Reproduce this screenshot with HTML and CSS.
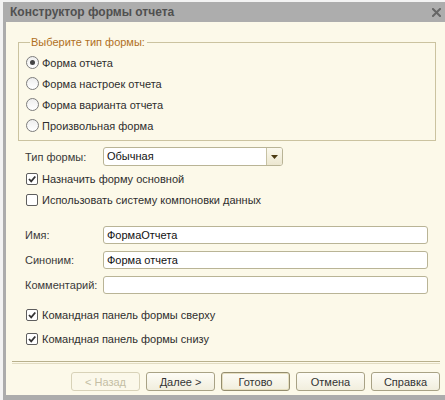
FILE: index.html
```html
<!DOCTYPE html>
<html lang="ru">
<head>
<meta charset="utf-8">
<title>Конструктор формы отчета</title>
<link rel="stylesheet" href="styles.css">
</head>
<body>
<div class="screen">
  <div class="window">
    <div class="titlebar">
      <span class="title">Конструктор формы отчета</span>
      <svg class="close" width="9" height="9" viewBox="0 0 9 9"><path d="M1 1 L8 8 M8 1 L1 8" stroke="#666" stroke-width="2" stroke-linecap="square"/></svg>
    </div>
    <div class="content">
      <fieldset class="group">
        <legend>Выберите тип формы:</legend>
        <div class="radio-row"><span class="radio checked"></span><span>Форма отчета</span></div>
        <div class="radio-row"><span class="radio"></span><span>Форма настроек отчета</span></div>
        <div class="radio-row"><span class="radio"></span><span>Форма варианта отчета</span></div>
        <div class="radio-row"><span class="radio"></span><span>Произвольная форма</span></div>
      </fieldset>

      <div class="field-row combo-row">
        <span class="label">Тип формы:</span>
        <div class="combo">
          <span class="combo-text">Обычная</span>
          <span class="combo-btn"><svg width="7" height="4" viewBox="0 0 7 4"><path d="M0 0 H7 L3.5 4 Z" fill="#4b3a12"/></svg></span>
        </div>
      </div>

      <div class="check-row first-check">
        <span class="check"><svg width="10" height="10" viewBox="0 0 10 10"><path d="M2 5 L4.2 7.3 L8.3 2.5" fill="none" stroke="#333" stroke-width="1.8"/></svg></span>
        <span>Назначить форму основной</span>
      </div>
      <div class="check-row">
        <span class="check"></span>
        <span>Использовать систему компоновки данных</span>
      </div>

      <div class="field-row input-row first-input">
        <span class="label">Имя:</span>
        <div class="input">ФормаОтчета</div>
      </div>
      <div class="field-row input-row">
        <span class="label">Синоним:</span>
        <div class="input">Форма отчета</div>
      </div>
      <div class="field-row input-row">
        <span class="label">Комментарий:</span>
        <div class="input"></div>
      </div>

      <div class="check-row tall first-tall">
        <span class="check"><svg width="10" height="10" viewBox="0 0 10 10"><path d="M2 5 L4.2 7.3 L8.3 2.5" fill="none" stroke="#333" stroke-width="1.8"/></svg></span>
        <span>Командная панель формы сверху</span>
      </div>
      <div class="check-row tall">
        <span class="check"><svg width="10" height="10" viewBox="0 0 10 10"><path d="M2 5 L4.2 7.3 L8.3 2.5" fill="none" stroke="#333" stroke-width="1.8"/></svg></span>
        <span>Командная панель формы снизу</span>
      </div>
    </div>
    <div class="separator"></div>
    <div class="buttons">
      <span class="btn disabled">&lt; Назад</span>
      <span class="btn">Далее &gt;</span>
      <span class="btn default">Готово</span>
      <span class="btn">Отмена</span>
      <span class="btn">Справка</span>
    </div>
  </div>
</div>
</body>
</html>
```

FILE: styles.css
```css
html, body {
  margin: 0;
  padding: 0;
}
body {
  width: 445px;
  height: 400px;
  overflow: hidden;
  background: #f3f3f3;
  font-family: "Liberation Sans", Arial, sans-serif;
  font-size: 11px;
  color: #2e2e2e;
}
.screen {
  padding: 2px 0 0 3px;
  height: 398px;
}
.window {
  background: #fcf9e9;
  border-left: 3px solid #acacac;
  border-bottom: 5px solid #acacac;
  height: 398px;
  box-sizing: border-box;
  display: flex;
  flex-direction: column;
}
.titlebar {
  height: 20px;
  background: #adadad;
  display: flex;
  align-items: center;
  justify-content: space-between;
  padding: 0 4px 0 4px;
  margin-left: -3px;
}
.title {
  font-weight: bold;
  font-size: 12px;
  color: #505050;
  padding-left: 3px;
}
.close {
  margin-top: 1px;
}
.content {
  padding: 13px 9px 0 12px;
}
.group {
  margin: 0;
  padding: 3px 0 4px 7px;
  border: 1px solid #cbc3a0;
  min-width: 0;
}
.group legend {
  color: #b0701e;
  padding: 0 2px 0 1px;
  margin-left: 4px;
  line-height: 14px;
}
.radio-row {
  height: 21px;
  display: flex;
  align-items: center;
}
.radio {
  width: 11px;
  height: 11px;
  border: 1px solid #7c7c7c;
  border-radius: 50%;
  background: linear-gradient(#eeeeee, #ffffff);
  margin-right: 3px;
  display: flex;
  align-items: center;
  justify-content: center;
  flex: none;
}
.radio.checked::after {
  content: "";
  width: 5px;
  height: 5px;
  border-radius: 50%;
  background: #444;
}
.field-row {
  display: flex;
  align-items: center;
  padding-left: 7px;
}
.label {
  width: 78px;
  flex: none;
  color: #3a3a3a;
}
.combo-row {
  margin-top: 6px;
}
.combo {
  width: 180px;
  height: 19px;
  box-sizing: border-box;
  border: 1px solid #b9b496;
  border-radius: 3px;
  background: #fff;
  display: flex;
  align-items: stretch;
}
.combo-text {
  flex: 1;
  padding-left: 3px;
  line-height: 17px;
  color: #111;
}
.combo-btn {
  width: 15px;
  border-left: 1px solid #c7c2a4;
  background: linear-gradient(#fbf9ee, #ece7d0);
  border-radius: 0 2px 2px 0;
  display: flex;
  align-items: center;
  justify-content: center;
}
.check-row {
  height: 21px;
  display: flex;
  align-items: center;
  padding-left: 8px;
}
.first-check {
  margin-top: 2px;
}
.check-row.tall {
  height: 24px;
}
.first-tall {
  margin-top: 9px;
}
.check {
  width: 10px;
  height: 10px;
  border: 1px solid #5e5e5e;
  border-radius: 2px;
  background: #fff;
  margin-right: 4px;
  flex: none;
  display: flex;
  align-items: center;
  justify-content: center;
}
.input-row {
  height: 18px;
  margin-top: 7px;
}
.first-input {
  margin-top: 16px;
}
.input {
  flex: 1;
  height: 18px;
  box-sizing: border-box;
  border: 1px solid #b9b496;
  border-radius: 3px;
  background: #fff;
  padding-left: 3px;
  line-height: 16px;
  color: #111;
  margin-right: 8px;
}
.separator {
  margin: 10px 5px 0 6px;
  height: 1px;
  border-top: 1px solid #b8b08c;
  border-bottom: 1px solid #e2dcc2;
}
.buttons {
  display: flex;
  justify-content: flex-end;
  gap: 6px;
  padding: 8px 5px 0 0;
}
.btn {
  width: 69px;
  height: 19px;
  box-sizing: border-box;
  border: 1px solid #a8a285;
  border-radius: 3px;
  background: linear-gradient(#fdfcf6, #f1eedd);
  display: flex;
  align-items: center;
  justify-content: center;
  color: #333;
}
.btn.disabled {
  border-color: #d8d2b8;
  color: #c4bea4;
  background: #fbf8ea;
}
.btn.default {
  box-shadow: inset 0 0 0 1px #e6dfc0;
  border-color: #948d6e;
}
```
